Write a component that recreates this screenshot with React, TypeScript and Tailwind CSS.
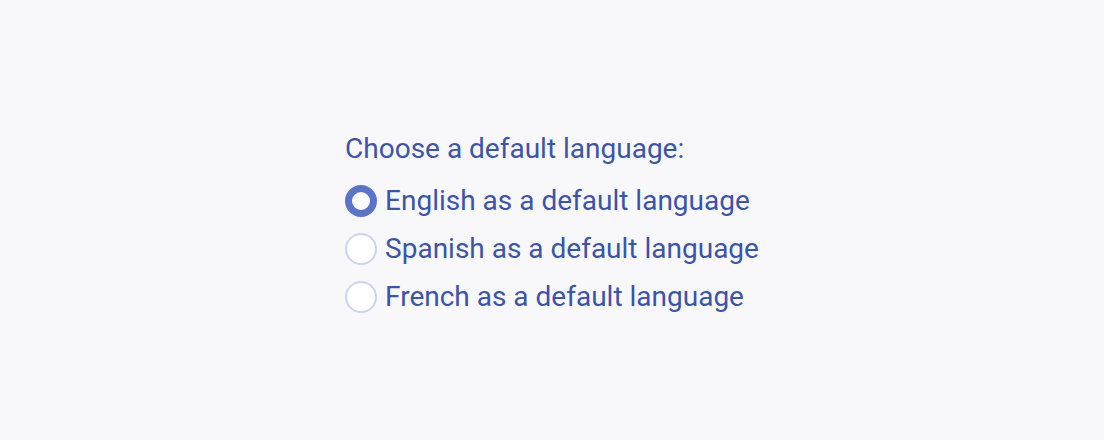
import React, { useState } from "react";

const options = [
  "English as a default language",
  "Spanish as a default language",
  "French as a default language",
];

export default function App() {
  const [selected, setSelected] = useState(0);
  return (
    <div
      className="flex h-[440px] w-full items-center justify-center bg-[#f8f8fb] pt-1.5 text-[#3b54aa]"
      style={{ fontFamily: "Roboto, 'Liberation Sans', sans-serif" }}
    >
      <div className="flex flex-col">
        <div className="mb-5 text-[28px] leading-8">Choose a default language:</div>
        <div className="flex flex-col gap-4">
          {options.map((o, i) => (
            <label key={o} className="flex cursor-pointer items-center gap-2">
              <span
                onClick={() => setSelected(i)}
                className={
                  i === selected
                    ? "h-8 w-8 shrink-0 rounded-full border-[7px] border-[#5874cc] bg-white"
                    : "h-8 w-8 shrink-0 rounded-full border-2 border-[#ccd4ea] bg-white"
                }
              />
              <span className="text-[28px] leading-8">{o}</span>
            </label>
          ))}
        </div>
      </div>
    </div>
  );
}
